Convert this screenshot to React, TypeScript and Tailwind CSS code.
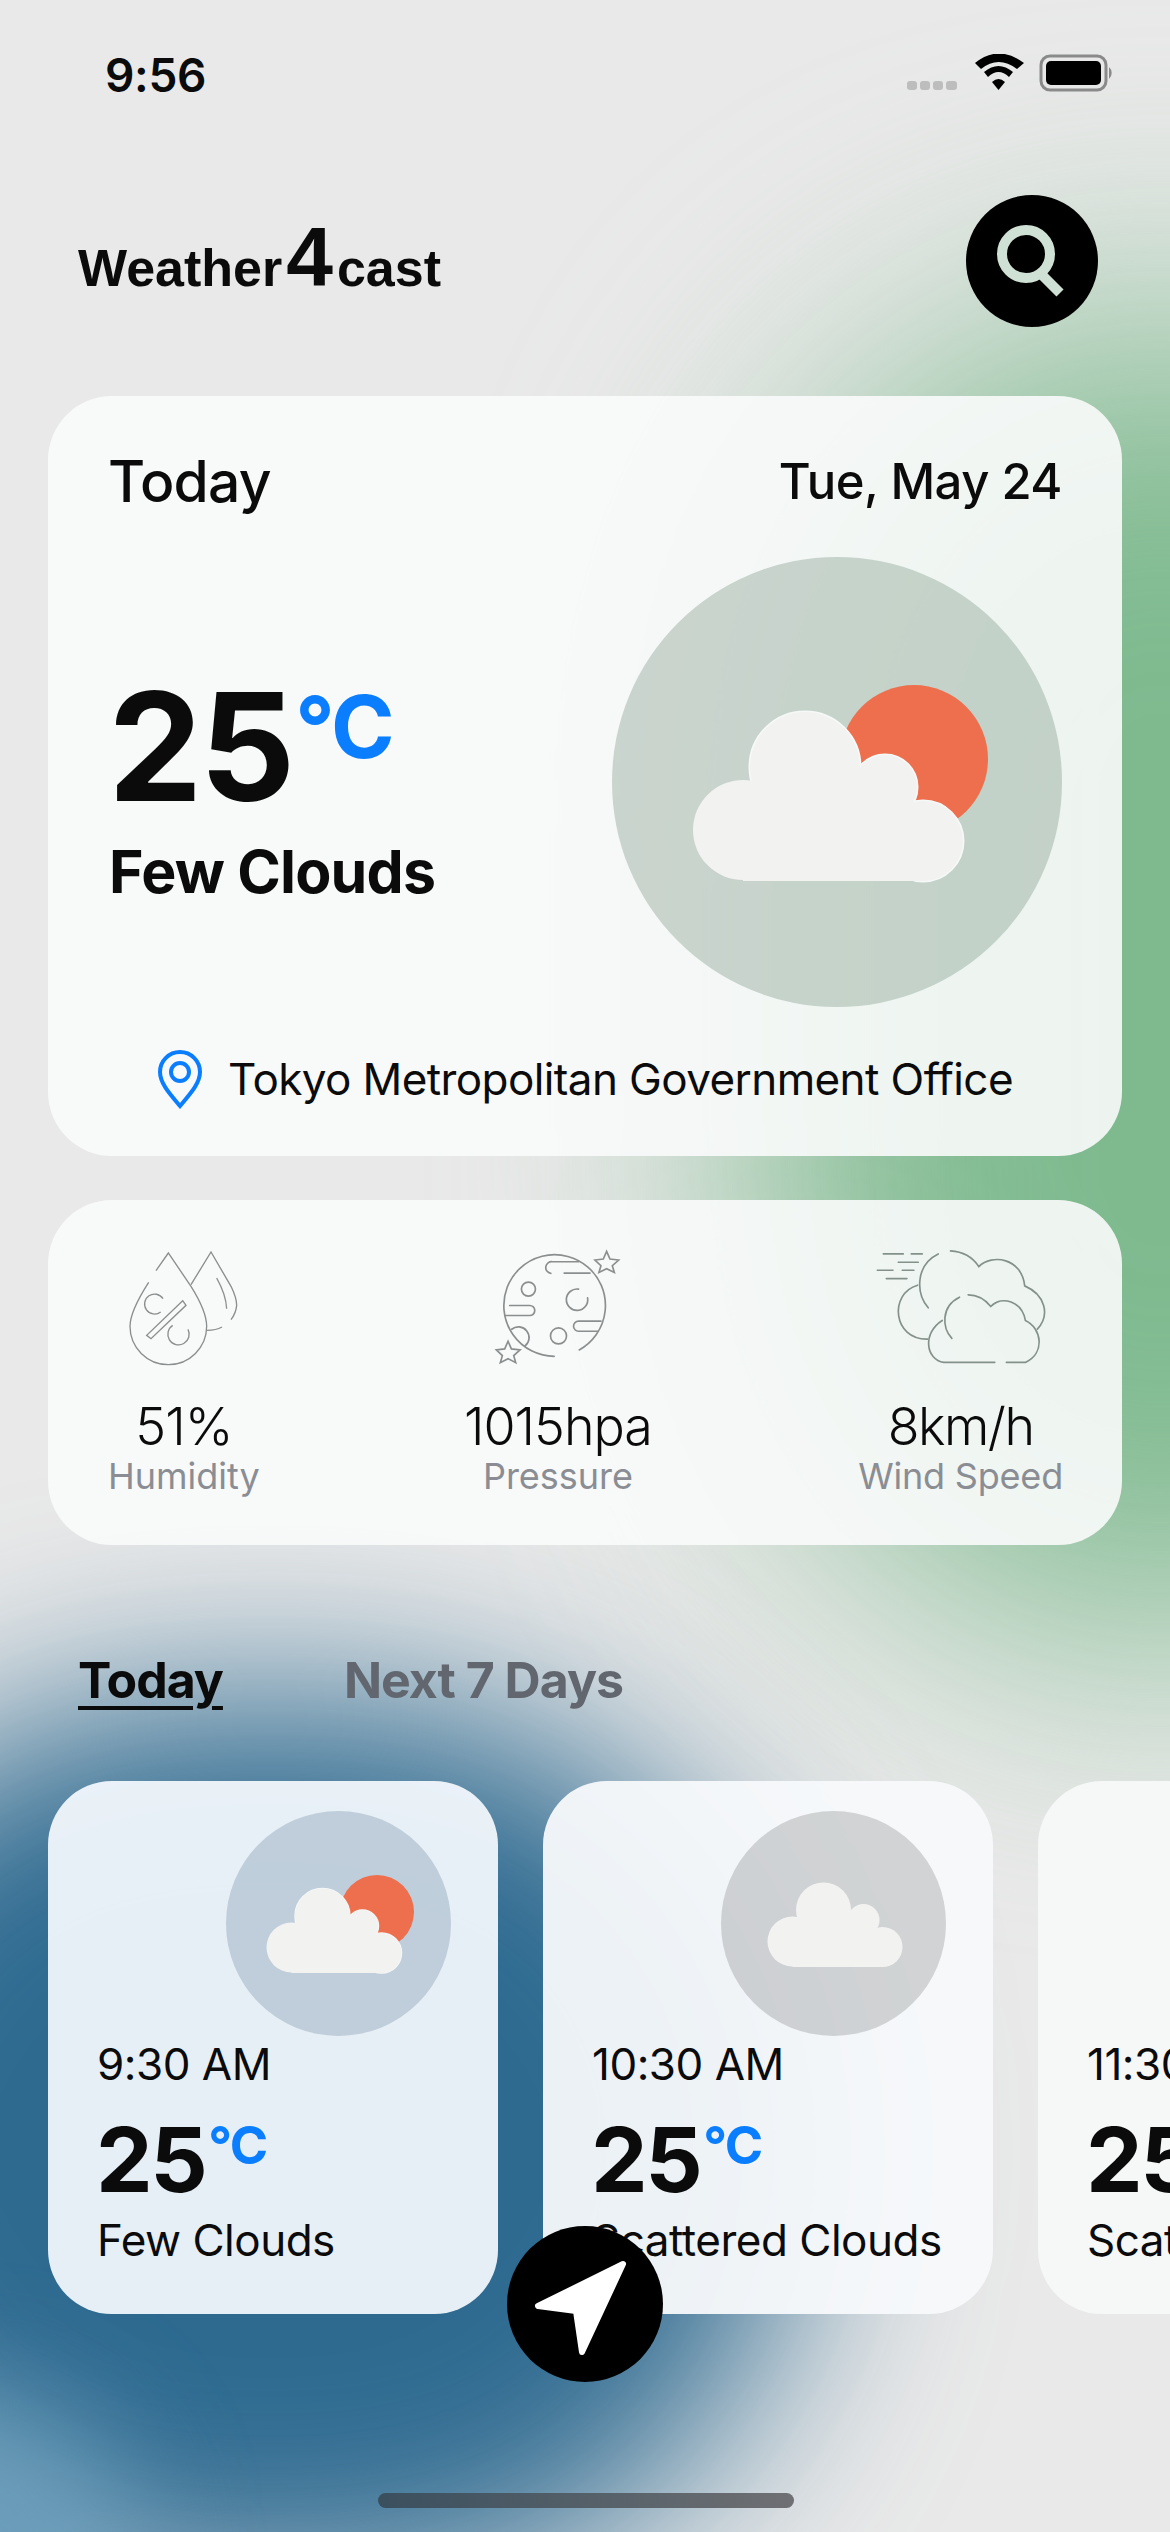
const hours = [
  { time: "9:30 AM", label: "Few Clouds", sun: true, tint: "bg-[#f1f7fc]/95", disc: "bg-[#0b3a5c]/[0.18]" },
  { time: "10:30 AM", label: "Scattered Clouds", sun: false, tint: "bg-[#f7f9fb]/95", disc: "bg-black/[0.15]" },
  { time: "11:30 AM", label: "Scattered Clouds", sun: false, tint: "bg-[#f7f8f8]/95", disc: "bg-black/[0.15]" },
];

function WeatherArt({ sun }: { sun: boolean }) {
  return (
    <svg viewBox="0 0 450 450" className="w-full h-full blur-[0.6px]">
      {sun ? <circle cx="302" cy="202" r="74" fill="#ee6f4d" /> : null}
      <g fill="#f2f2f1" stroke={sun ? "#f5f9f7" : "none"} strokeWidth="3">
        {sun ? (
          <>
            <circle cx="193" cy="210" r="55" />
            <circle cx="273" cy="230" r="32" />
            <circle cx="311" cy="284" r="40" />
          </>
        ) : null}
      </g>
      <g fill="#f2f2f1" transform={sun ? undefined : "translate(12 -12)"}>
        <rect x="131" y="250" width="180" height="74" />
        <rect x="170" y="225" width="110" height="40" />
        <circle cx="131" cy="273" r="50" />
        <circle cx="193" cy="210" r="55" />
        <circle cx="273" cy="230" r="32" />
        <circle cx="311" cy="284" r="40" />
      </g>
    </svg>
  );
}

function HumidityIcon() {
  return (
    <svg viewBox="200 140 345 360" className="w-[115px] h-[120px]" fill="none" stroke="#8b8e8e" strokeWidth="4">
      <path d="M290 208 L327 155 L395 255 Q442 330 442 375 A115 115 0 0 1 212 375 Q212 330 268 243" />
      <path d="M370 298 L380 312 L275 412 L262 402 Z" />
      <path d="M311 292 A30 30 0 1 0 304 332" />
      <path d="M340 372 A32 32 0 1 0 386 384" />
      <path d="M395 250 L455 152 L515 255 Q532 290 532 312 Q530 335 515 355" />
      <path d="M472 230 Q500 280 502 322" />
      <path d="M443 387 Q470 387 488 377" />
    </svg>
  );
}

function PressureIcon() {
  return (
    <svg viewBox="165 145 380 350" className="w-[127px] h-[117px]" fill="none" stroke="#8b8e8e" strokeWidth="5" strokeLinecap="round">
      <path d="M345 469 A152 152 0 1 1 420 450" />
      <path d="M418 186 L340 186 A17 17 0 0 0 335 221" />
      <path d="M375 220 L452 220" />
      <circle cx="268" cy="268" r="21" />
      <path d="M418 268 A32 32 0 1 0 445 294" />
      <path d="M212 317 L272 317 A15 15 0 0 1 272 347 L198 347" />
      <path d="M485 364 L418 364 A15 15 0 0 0 418 394 L476 394" />
      <circle cx="358" cy="408" r="24" />
      <path d="M218 388 A32 32 0 0 1 258 438" />
      <path d="M502 155 L512 178 L538 181 L519 198 L525 218 L502 207 L479 218 L485 198 L467 181 L492 178 Z" />
      <path d="M207 424 L217 447 L243 450 L224 467 L230 488 L207 476 L184 488 L190 467 L172 450 L197 447 Z" />
    </svg>
  );
}

function WindIcon() {
  return (
    <svg viewBox="215 145 520 350" className="w-[173px] h-[117px]" fill="none" stroke="#84918a" strokeWidth="5" strokeLinecap="round">
      <path d="M243 162 L303 162 M327 162 L360 162 M288 187 L348 187 M225 211 L272 211 M300 211 L335 211 M252 236 L314 236" />
      <path d="M378 324 C340 280 340 195 408 162" />
      <path d="M445 153 C480 155 510 170 530 200 C570 160 660 175 668 258 C730 285 745 345 706 388" />
      <path d="M346 256 C260 280 270 420 376 418" />
      <path d="M449 416 C420 385 415 320 472 292" />
      <path d="M498 285 C525 285 550 300 566 320 C600 285 660 305 670 362 C720 385 730 460 670 488 L613 488" />
      <path d="M578 488 L425 488 C370 480 360 400 420 362" />
    </svg>
  );
}

export default function App() {
  return (
    <div className="relative w-[1170px] h-[2532px] overflow-hidden bg-[#e9e9e9] font-['Inter',sans-serif] text-[#0b0b0b]">
      <div className="absolute left-[760px] top-[320px] w-[800px] h-[1320px] rounded-full bg-[#7fba8f] blur-[140px]" />
      <div className="absolute left-[-260px] top-[1700px] w-[1060px] h-[900px] rounded-full bg-[#2e6a90] blur-[100px]" />
      <div className="absolute left-[-330px] top-[2400px] w-[460px] h-[320px] rounded-full bg-[#6a9dba] blur-[60px]" />

      <div className="relative flex flex-col">
        <div className="h-[150px] pl-[105px] pr-[55px] pt-[48px] flex justify-between items-start">
          <span className="text-[46px] leading-[54px] font-semibold tracking-[-0.3px]">9:56</span>
          <svg viewBox="0 0 210 40" className="w-[210px] h-[40px] mt-[6px]">
            <g fill="#bdbdbd">
              <rect x="2" y="27" width="10" height="9" rx="3" />
              <rect x="15" y="27" width="10" height="9" rx="3" />
              <rect x="28" y="27" width="10" height="9" rx="3" />
              <rect x="41" y="27" width="11" height="9" rx="3" />
            </g>
            <path d="M93.500 36 L87 28 Q93.500 22 100 28 Z M83 23 L79 18 Q93.500 6 108 18 L104 23 Q93.500 13 83 23 Z M76 15 L70 9 Q93.500 -10 119 9 L112 15 Q93.500 1 76 15 Z" fill="#000" />
            <rect x="136" y="2" width="65" height="34" rx="9" fill="none" stroke="#8a8a8a" strokeWidth="3" />
            <rect x="141" y="7" width="55" height="24" rx="5" fill="#000" />
            <path d="M204 13 A8 8 0 0 1 204 25 Z" fill="#8a8a8a" />
          </svg>
        </div>

        <header className="h-[132px] mt-[45px] pl-[78px] pr-[72px] flex justify-between items-center">
          <h1 className="font-['Liberation_Sans',sans-serif] font-bold text-[52px] leading-none mt-[-8px] flex items-baseline">
            Weather<span className="text-[84px] leading-none px-[4px]">4</span>cast
          </h1>
          <button className="w-[132px] h-[132px] rounded-full bg-black flex items-center justify-center">
            <svg viewBox="0 0 132 132" className="w-[132px] h-[132px]" fill="none" stroke="#cfe0d4" strokeWidth="10">
              <circle cx="60" cy="59" r="24" />
              <path d="M76 80 L94 98" />
            </svg>
          </button>
        </header>

        <section className="mt-[69px] mx-[48px] h-[760px] rounded-[64px] bg-[#fafbfb]/90 pt-[54px] px-[60px] flex flex-col">
          <div className="flex justify-between items-center h-[62px]">
            <span className="text-[57px] leading-none font-medium tracking-[-0.8px]">Today</span>
            <span className="text-[49px] leading-none font-medium tracking-[-0.5px]">Tue, May 24</span>
          </div>
          <div className="flex justify-between mt-[45px]">
            <div className="pt-[115px]">
              <div className="flex items-start">
                <span className="text-[150px] leading-[150px] font-bold tracking-[-3px]">25</span>
                <span className="text-[86px] leading-[90px] font-bold tracking-[-2.500px] text-[#0a7eff] mt-[10px] ml-[3px]">°C</span>
              </div>
              <div className="text-[59px] leading-[64px] font-bold tracking-[-0.8px] ml-[1px] mt-[18px]">Few Clouds</div>
            </div>
            <div className="w-[450px] h-[450px] rounded-full bg-[#003312]/[0.18]">
              <WeatherArt sun />
            </div>
          </div>
          <div className="flex justify-center items-center gap-[25px] mt-[42px]">
            <svg viewBox="0 0 46 60" className="w-[46px] h-[60px]" fill="none" stroke="#0a7eff" strokeWidth="4">
              <path d="M23 57 C12 44 3 34 3 23 A20 20 0 0 1 43 23 C43 34 34 44 23 57 Z" />
              <circle cx="23" cy="23" r="9" />
            </svg>
            <span className="text-[44px] leading-none tracking-[-0.6px]">Tokyo Metropolitan Government Office</span>
          </div>
        </section>

        <section className="mt-[44px] mx-[48px] h-[345px] rounded-[64px] bg-[#fafbfb]/90 pt-[48px] pl-[60px] pr-[59px] flex justify-between">
          <div className="flex flex-col items-center">
            <HumidityIcon />
            <div className="text-[52px] leading-[60px] font-light mt-[29px] tracking-[-1px]">51%</div>
            <div className="text-[36px] leading-[40px] text-[#8a8d93] mt-[-1px]">Humidity</div>
          </div>
          <div className="flex flex-col items-center ml-[-2px]">
            <PressureIcon />
            <div className="text-[52px] leading-[60px] font-light mt-[32px] tracking-[-1px]">1015hpa</div>
            <div className="text-[36px] leading-[40px] text-[#8a8d93] mt-[-1px]">Pressure</div>
          </div>
          <div className="flex flex-col items-center">
            <WindIcon />
            <div className="text-[52px] leading-[60px] font-light mt-[32px] tracking-[-1.500px]">8km/h</div>
            <div className="text-[36px] leading-[40px] tracking-[-0.2px] text-[#8a8d93] mt-[-1px]">Wind Speed</div>
          </div>
        </section>

        <nav className="mt-[104px] pl-[78px] flex items-center gap-[121px] h-[62px]">
          <span className="text-[50px] leading-none font-bold underline underline-offset-[8px] decoration-[4px] tracking-[-1px]">Today</span>
          <span className="text-[50px] leading-none font-bold text-[#62676f] tracking-[-1px]">Next 7 Days</span>
        </nav>

        <div className="mt-[70px] pl-[48px] flex gap-[45px] overflow-hidden">
          {hours.map((h) => (
            <div key={h.time} className={`shrink-0 w-[450px] h-[533px] rounded-[64px] px-[49px] pt-[30px] ${h.tint}`}>
              <div className={`ml-auto mr-[-2px] w-[225px] h-[225px] rounded-full ${h.disc}`}>
                <WeatherArt sun={h.sun} />
              </div>
              <div className="text-[44px] leading-[52px] mt-[2px] tracking-[-0.5px] whitespace-nowrap">{h.time}</div>
              <div className="flex items-start mt-[22px] -ml-[1px]">
                <span className="text-[90px] leading-[96px] font-bold tracking-[-2.500px]">25</span>
                <span className="text-[52px] leading-[56px] font-bold tracking-[-1.500px] text-[#0a7eff] ml-[3px] mt-[6px]">°C</span>
              </div>
              <div className="text-[44px] leading-[52px] mt-[6px] tracking-[-0.5px] whitespace-nowrap">{h.label}</div>
            </div>
          ))}
        </div>
      </div>

      <button className="absolute left-[507px] top-[2226px] w-[156px] h-[156px] rounded-full bg-black">
        <svg viewBox="0 0 156 156" className="w-[156px] h-[156px]">
          <path d="M116 38 L31 80 L69 85 L75 126 Z" fill="#fff" stroke="#fff" strokeWidth="6" strokeLinejoin="round" />
        </svg>
      </button>
      <div className="absolute left-[378px] top-[2493px] w-[416px] h-[15px] rounded-full bg-linear-to-r from-[#3a4f5e] to-[#6f7073]" />
    </div>
  );
}
